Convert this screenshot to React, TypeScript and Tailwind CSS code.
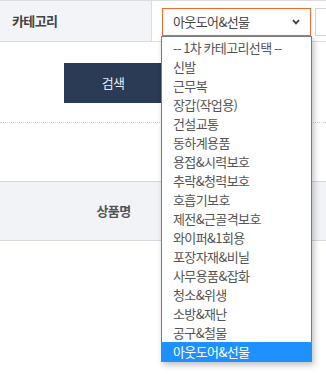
const categories = [
  "-- 1차 카테고리선택 --",
  "신발",
  "근무복",
  "장갑(작업용)",
  "건설교통",
  "동하계용품",
  "용접&시력보호",
  "추락&청력보호",
  "호흡기보호",
  "제전&근골격보호",
  "와이퍼&1회용",
  "포장자재&비닐",
  "사무용품&잡화",
  "청소&위생",
  "소방&재난",
  "공구&철물",
  "아웃도어&선물",
];

const selected = "아웃도어&선물";

const App = () => {
  return (
    <div
      className="relative w-[326px] h-[375px] overflow-hidden bg-white tracking-[-0.6px]"
      style={{ fontFamily: '"Noto Sans CJK KR", "Noto Sans", sans-serif' }}
    >
      {/* search form row */}
      <div className="flex h-[42px] border-t border-b border-[#dcdde0]">
        <div className="flex w-[152px] shrink-0 items-center border-r border-[#dcdde0] bg-[#f3f4f7] pl-[12px] text-[13px] font-bold text-[#444]">
          카테고리
        </div>
        <div className="flex items-start gap-[4px] pt-[7px] pl-[10px]">
          <div className="relative">
            <div className="flex h-[28px] w-[149px] items-center justify-between border border-[#f26a2e] bg-white pl-[10px] pr-[10px] text-[13px] text-[#444]">
              <span>{selected}</span>
              <svg width="8" height="6" viewBox="0 0 8 6">
                <path d="M1 1.2 L4 4.4 L7 1.2" fill="none" stroke="#444" strokeWidth="1.9" />
              </svg>
            </div>
            {/* open dropdown */}
            <ul className="absolute left-[-1px] top-[28px] z-10 w-[151px] border border-[#7b7b7b] bg-white pt-px shadow-[2px_3px_6px_rgba(0,0,0,0.25)]">
              {categories.map((c) => (
                <li
                  key={c}
                  className={`h-[19px] pl-[11px] text-[13px] leading-[19px] ${
                    c === selected ? "bg-[#1e90ff] text-white" : "text-[#555]"
                  }`}
                >
                  {c}
                </li>
              ))}
            </ul>
          </div>
          <div className="h-[28px] w-[60px] border border-[#d4d4d4] bg-white"></div>
        </div>
      </div>

      {/* buttons */}
      <div className="flex pt-[21px] pl-[64px]">
        <button className="h-[40px] w-[98px] bg-[#2b3a55] text-[13px] text-[#e8ebf2]">검색</button>
      </div>

      <div className="mt-[19px] border-t border-dotted border-[#cfcfcf]"></div>

      {/* list table header */}
      <div className="mt-[58px] flex h-[60px] items-center border-t border-b border-[#d6d9de] bg-[#f2f3f6]">
        <div className="w-[227px] text-center text-[13px] font-bold text-[#555]">상품명</div>
      </div>
    </div>
  );
};

export default App;
